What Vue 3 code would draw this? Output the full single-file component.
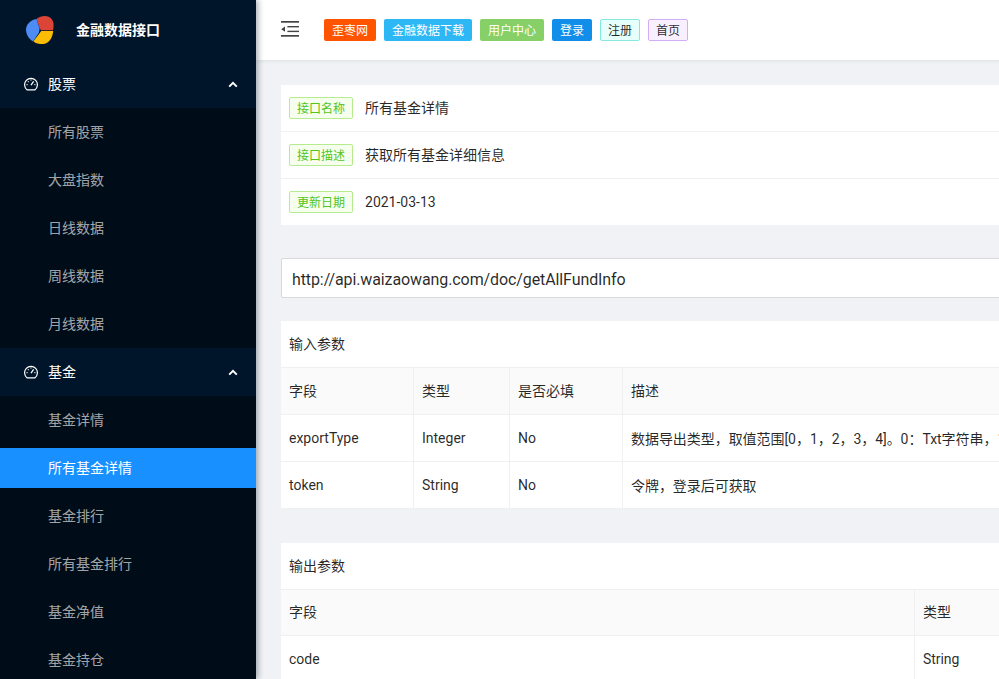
<template>
  <div class="layout">
    <aside class="sider">
      <div class="logo">
        <svg class="logo-mark" width="28" height="28" viewBox="0 0 28 28">
          <path d="M10.5 3 C13 0.8 17 -0.2 20.5 0.2 C25 0.8 27.6 4.5 27.6 9 C27.6 11 27.4 12.6 27 14.2 L15.2 14.2 L13.8 12.6 Z" fill="#db4437" />
          <path d="M10.5 3 L13.6 12.8 L13 16.6 L7 25.4 C3 23 0 18.5 0 13.5 C0 8.5 4.5 4 10.5 3 Z" fill="#4d8cf5" />
          <path d="M15.2 15 L27.2 15 C26.5 22.5 22.5 28 17 28 C13 28 9.5 27.5 7.4 25.2 L13.6 17.2 Z" fill="#fbbc05" />
        </svg>
        <span class="logo-title">金融数据接口</span>
      </div>
      <div v-for="group in menu" :key="group.title">
        <div class="sub-title">
          <svg class="dash" width="14" height="14" viewBox="0 0 14 14" fill="none" stroke="currentColor" stroke-width="1.2">
            <path d="M3 12.8 A6.4 6.4 0 1 1 11 12.8 Z" stroke-linejoin="round" />
            <path d="M7 8.2 L9.6 4.4" stroke-width="1.3" />
            <path d="M7 2.4 V3.4 M2.6 7.6 H3.6 M10.4 7.6 H11.4 M3.9 4.4 L4.6 5.1" />
          </svg>
          <span class="sub-text">{{ group.title }}</span>
          <svg class="arrow" width="10" height="7" viewBox="0 0 10 7" fill="none" stroke="currentColor" stroke-width="2">
            <path d="M1.2 5.6 L5 1.8 L8.8 5.6" />
          </svg>
        </div>
        <ul class="sub-list">
          <li v-for="item in group.items" :key="item" :class="{ active: item === current }">{{ item }}</li>
        </ul>
      </div>
    </aside>

    <div class="main">
      <header class="header">
        <svg class="trigger" width="18" height="16" viewBox="0 0 18 16" fill="#444">
          <rect x="0" y="0" width="18" height="1.7" />
          <rect x="6.4" y="5" width="11.6" height="1.4" />
          <rect x="6.4" y="9.7" width="11.6" height="1.4" />
          <rect x="0" y="14" width="18" height="1.7" />
          <path d="M0.2 8.2 L4 5.6 V10.8 Z" />
        </svg>
        <div class="nav-tags">
          <span v-for="tag in navTags" :key="tag.text" class="nav-tag" :class="tag.cls">{{ tag.text }}</span>
        </div>
      </header>

      <div class="content">
        <section class="card info">
          <div v-for="row in infoRows" :key="row.label" class="info-row">
            <span class="green-tag">{{ row.label }}</span>
            <span class="info-value" :class="{ cjk: row.cjk }">{{ row.value }}</span>
          </div>
        </section>

        <input class="url-input" type="text" value="http://api.waizaowang.com/doc/getAllFundInfo" />

        <section class="card">
          <div class="card-title">输入参数</div>
          <table class="params">
            <colgroup>
              <col style="width: 132.5px" />
              <col style="width: 96px" />
              <col style="width: 113px" />
              <col />
            </colgroup>
            <thead>
              <tr><th>字段</th><th>类型</th><th>是否必填</th><th>描述</th></tr>
            </thead>
            <tbody>
              <tr v-for="row in inputParams" :key="row[0]">
                <td v-for="cell in row" :key="cell">{{ cell }}</td>
              </tr>
            </tbody>
          </table>
        </section>

        <section class="card last">
          <div class="card-title">输出参数</div>
          <table class="params">
            <colgroup>
              <col style="width: 633.5px" />
              <col />
            </colgroup>
            <thead>
              <tr><th>字段</th><th>类型</th></tr>
            </thead>
            <tbody>
              <tr><td>code</td><td>String</td></tr>
            </tbody>
          </table>
        </section>
      </div>
    </div>
  </div>
</template>

<script setup>
const current = '所有基金详情'

const menu = [
  { title: '股票', items: ['所有股票', '大盘指数', '日线数据', '周线数据', '月线数据'] },
  { title: '基金', items: ['基金详情', '所有基金详情', '基金排行', '所有基金排行', '基金净值', '基金持仓'] },
]

const navTags = [
  { text: '歪枣网', cls: 'orange' },
  { text: '金融数据下载', cls: 'sky' },
  { text: '用户中心', cls: 'lime' },
  { text: '登录', cls: 'blue' },
  { text: '注册', cls: 'cyan' },
  { text: '首页', cls: 'purple' },
]

const infoRows = [
  { label: '接口名称', value: '所有基金详情', cjk: true },
  { label: '接口描述', value: '获取所有基金详细信息', cjk: true },
  { label: '更新日期', value: '2021-03-13' },
]

const inputParams = [
  ['exportType', 'Integer', 'No', '数据导出类型，取值范围[0，1，2，3，4]。0：Txt字符串，1'],
  ['token', 'String', 'No', '令牌，登录后可获取'],
]
</script>

<style>
html,
body {
  margin: 0;
  overflow: hidden;
}
</style>

<style scoped>
.layout {
  display: flex;
  width: 999px;
  height: 679px;
  overflow: hidden;
  background: #f0f2f5;
  font-family: Roboto, "Noto Sans CJK SC", sans-serif;
  font-size: 14px;
  color: rgba(0, 0, 0, 0.85);
}

.sider {
  position: relative;
  z-index: 2;
  flex: 0 0 256px;
  background: #001529;
  box-shadow: 2px 0 6px rgba(0, 21, 41, 0.35);
  overflow: hidden;
}

.logo {
  display: flex;
  align-items: center;
  height: 60px;
  padding-left: 26px;
}

.logo-mark {
  flex: none;
}

.logo-title {
  margin-left: 22px;
  font-size: 14px;
  font-weight: 700;
  line-height: 20px;
  color: #fff;
}

.sub-title {
  display: flex;
  align-items: center;
  height: 48px;
  padding-left: 24px;
  color: #fff;
}

.sub-text {
  margin-bottom: 2px;
}

.dash {
  margin-right: 10px;
}

.arrow {
  margin-left: auto;
  margin-right: 18px;
}

.sub-list {
  display: flex;
  flex-direction: column;
  gap: 8px;
  margin: 0;
  padding: 4px 0;
  list-style: none;
  background: #000c17;
}

.sub-list li {
  height: 40px;
  padding-left: 48px;
  line-height: 40px;
  color: rgba(255, 255, 255, 0.65);
}

.sub-list li.active {
  background: #1890ff;
  color: #fff;
}

.main {
  flex: 0 0 1200px;
  display: flex;
  flex-direction: column;
}

.header {
  display: flex;
  align-items: center;
  height: 60px;
  flex: none;
  padding-left: 25px;
  background: #fff;
  box-shadow: 0 1px 4px rgba(0, 21, 41, 0.08);
}

.trigger {
  flex: none;
  margin-top: -2px;
}

.nav-tags {
  display: flex;
  gap: 8px;
  margin-left: 25px;
}

.nav-tag {
  box-sizing: border-box;
  height: 22px;
  padding: 0 7px;
  border: 1px solid transparent;
  border-radius: 2px;
  font-size: 12px;
  line-height: 22px;
  color: #fff;
}

.orange { background: #f50; }
.sky { background: #2db7f5; }
.lime { background: #87d068; }
.blue { background: #108ee9; }

.cyan {
  background: #e6fffb;
  border-color: #87e8de;
  color: rgba(0, 0, 0, 0.85);
}

.purple {
  background: #f9f0ff;
  border-color: #d3adf7;
  color: rgba(0, 0, 0, 0.85);
}

.content {
  padding: 25px 0 0 25px;
}

.card {
  background: #fff;
  margin-bottom: 33px;
}

.card.last {
  margin-top: 34px;
}

.info-row {
  display: flex;
  align-items: center;
  height: 46px;
  padding-left: 8px;
  border-bottom: 1px solid #f0f0f0;
}

.info-row:last-child {
  border-bottom: 0;
}

.green-tag {
  box-sizing: border-box;
  height: 22px;
  padding: 0 7px;
  border: 1px solid #b7eb8f;
  border-radius: 2px;
  background: #f6ffed;
  font-size: 12px;
  line-height: 22px;
  color: #52c41a;
}

.info-value {
  margin-left: 12px;
}

.info-value.cjk {
  margin-bottom: 2px;
}

.url-input {
  display: block;
  box-sizing: border-box;
  width: 100%;
  height: 40px;
  margin-bottom: 23px;
  padding: 3px 10px 0;
  border: 1px solid #d9d9d9;
  border-radius: 2px;
  outline: none;
  background: #fff;
  font-family: inherit;
  font-size: 16px;
  letter-spacing: -0.1px;
  color: rgba(0, 0, 0, 0.85);
}

.card-title {
  height: 46px;
  padding-left: 8px;
  line-height: 46px;
  border-bottom: 1px solid #f0f0f0;
}

.params {
  width: 100%;
  table-layout: fixed;
  border-collapse: collapse;
}

.params th,
.params td {
  box-sizing: border-box;
  height: 47px;
  padding: 0 8px;
  text-align: left;
  font-weight: 400;
  white-space: nowrap;
  overflow: hidden;
  border-bottom: 1px solid #f0f0f0;
  border-right: 1px solid #f0f0f0;
}

.params td:last-child {
  letter-spacing: -0.05px;
}

.params th {
  height: 46px;
  padding-bottom: 2px;
  background: #fafafa;
}
</style>
